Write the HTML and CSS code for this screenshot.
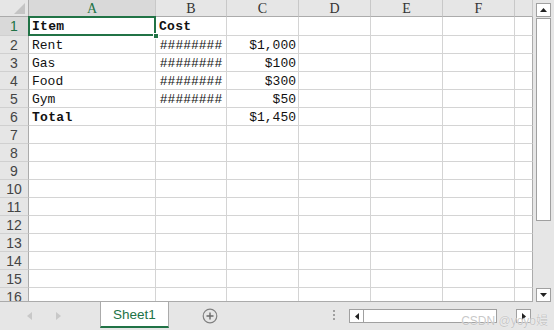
FILE: index.html
```html
<!DOCTYPE html>
<html>
<head>
<meta charset="utf-8">
<link rel="stylesheet" href="styles.css">
</head>
<body>
<div class="app">
  <div class="main">
    <div class="sheet">
      <div class="corner"><svg width="11" height="11" viewBox="0 0 11 11"><polygon points="11,0 11,11 0,11" fill="#c4c4c4"/></svg></div>
      <div class="ch sel">A</div>
      <div class="ch">B</div>
      <div class="ch">C</div>
      <div class="ch">D</div>
      <div class="ch">E</div>
      <div class="ch">F</div>
      <div class="ch"></div>

      <div class="rh sel">1</div><div class="c b">Item</div><div class="c b">Cost</div><div class="c"></div><div class="c"></div><div class="c"></div><div class="c"></div><div class="c"></div>
      <div class="rh">2</div><div class="c">Rent</div><div class="c h">########</div><div class="c r">$1,000</div><div class="c"></div><div class="c"></div><div class="c"></div><div class="c"></div>
      <div class="rh">3</div><div class="c">Gas</div><div class="c h">########</div><div class="c r">$100</div><div class="c"></div><div class="c"></div><div class="c"></div><div class="c"></div>
      <div class="rh">4</div><div class="c">Food</div><div class="c h">########</div><div class="c r">$300</div><div class="c"></div><div class="c"></div><div class="c"></div><div class="c"></div>
      <div class="rh">5</div><div class="c">Gym</div><div class="c h">########</div><div class="c r">$50</div><div class="c"></div><div class="c"></div><div class="c"></div><div class="c"></div>
      <div class="rh">6</div><div class="c b">Total</div><div class="c"></div><div class="c r">$1,450</div><div class="c"></div><div class="c"></div><div class="c"></div><div class="c"></div>
      <div class="rh">7</div><div class="c"></div><div class="c"></div><div class="c"></div><div class="c"></div><div class="c"></div><div class="c"></div><div class="c"></div>
      <div class="rh">8</div><div class="c"></div><div class="c"></div><div class="c"></div><div class="c"></div><div class="c"></div><div class="c"></div><div class="c"></div>
      <div class="rh">9</div><div class="c"></div><div class="c"></div><div class="c"></div><div class="c"></div><div class="c"></div><div class="c"></div><div class="c"></div>
      <div class="rh">10</div><div class="c"></div><div class="c"></div><div class="c"></div><div class="c"></div><div class="c"></div><div class="c"></div><div class="c"></div>
      <div class="rh">11</div><div class="c"></div><div class="c"></div><div class="c"></div><div class="c"></div><div class="c"></div><div class="c"></div><div class="c"></div>
      <div class="rh">12</div><div class="c"></div><div class="c"></div><div class="c"></div><div class="c"></div><div class="c"></div><div class="c"></div><div class="c"></div>
      <div class="rh">13</div><div class="c"></div><div class="c"></div><div class="c"></div><div class="c"></div><div class="c"></div><div class="c"></div><div class="c"></div>
      <div class="rh">14</div><div class="c"></div><div class="c"></div><div class="c"></div><div class="c"></div><div class="c"></div><div class="c"></div><div class="c"></div>
      <div class="rh">15</div><div class="c"></div><div class="c"></div><div class="c"></div><div class="c"></div><div class="c"></div><div class="c"></div><div class="c"></div>
      <div class="rh">16</div><div class="c"></div><div class="c"></div><div class="c"></div><div class="c"></div><div class="c"></div><div class="c"></div><div class="c"></div>

      <div class="selection"><div class="handle"></div></div>
    </div>
    <div class="vscroll">
      <div class="sbtn"><svg width="7" height="4" viewBox="0 0 7 4"><polygon points="3.5,0 7,4 0,4" fill="#222"/></svg></div>
      <div class="vthumb"></div>
      <div class="vspace"></div>
      <div class="sbtn"><svg width="7" height="4" viewBox="0 0 7 4"><polygon points="0,0 7,0 3.5,4" fill="#222"/></svg></div>
    </div>
  </div>
  <div class="tabbar">
    <div class="nav">
      <svg width="5" height="8" viewBox="0 0 5 8"><polygon points="5,0 5,8 0,4" fill="#c8c8c8"/></svg>
      <svg width="5" height="8" viewBox="0 0 5 8"><polygon points="0,0 5,4 0,8" fill="#c8c8c8"/></svg>
    </div>
    <div class="tab">Sheet1</div>
    <div class="add"><svg width="16" height="16" viewBox="0 0 16 16"><circle cx="8" cy="8" r="6.8" fill="none" stroke="#808080" stroke-width="1.2"/><path d="M8 4.5v7M4.5 8h7" stroke="#6a6a6a" stroke-width="1.4"/></svg></div>
    <div class="dots"><span></span><span></span><span></span></div>
    <div class="hscroll">
      <div class="hbtn"><svg width="4" height="7" viewBox="0 0 4 7"><polygon points="4,0 4,7 0,3.5" fill="#222"/></svg></div>
      <div class="hthumb"></div>
      <div class="htrack"></div>
      <div class="hbtn"><svg width="4" height="7" viewBox="0 0 4 7"><polygon points="0,0 4,3.5 0,7" fill="#222"/></svg></div>
    </div>
    <div class="watermark">CSDN @yoyo嫚</div>
  </div>
</div>
</body>
</html>
```
FILE: styles.css
```css
* { box-sizing: border-box; }
html, body { margin: 0; padding: 0; }
body { width: 554px; height: 330px; overflow: hidden; background: #e6e6e6; }
.app { width: 554px; height: 330px; display: flex; flex-direction: column; position: relative; }
.main { display: flex; height: 302px; }
.sheet {
  position: relative;
  width: 533px;
  height: 302px;
  overflow: hidden;
  display: grid;
  grid-template-columns: 29px 127px 71px 72px 72px 72px 72px 18px;
  grid-template-rows: 17px 19px repeat(15, 18px);
  background: #fff;
  border-bottom: 1px solid #ababab;
}
.corner {
  background: #e6e6e6;
  border-right: 1px solid #ababab;
  border-bottom: 1px solid #ababab;
  display: flex; align-items: flex-end; justify-content: flex-end;
  padding: 0 3px 2px 0;
}
.ch {
  background: #e6e6e6;
  border-right: 1px solid #c8c8c8;
  border-bottom: 1px solid #ababab;
  font-family: "Liberation Serif", serif;
  font-size: 14px;
  color: #333;
  text-align: center;
  line-height: 18px;
}
.ch:last-of-type { border-right: 1px solid #ababab; }
.ch.sel { background: #d9d9d9; color: #217346; border-bottom: 1px solid #217346; }
.rh {
  background: #e6e6e6;
  border-right: 1px solid #ababab;
  border-bottom: 1px solid #d0d0d0;
  font-family: "Liberation Sans", sans-serif;
  font-size: 14px;
  color: #444;
  text-align: center;
  line-height: 17px;
  padding-top: 1px;
}
.rh.sel { background: #d9d9d9; color: #217346; }
.c {
  border-right: 1px solid #d4d4d4;
  border-bottom: 1px solid #d4d4d4;
  font-family: "Liberation Mono", monospace;
  font-size: 13px;
  color: #111;
  padding: 1px 2px 0 3px;
  line-height: 18px;
  white-space: nowrap;
  overflow: hidden;
}
.c:nth-child(8n+8) { border-right: 1px solid #ababab; }
.c.b { font-weight: bold; letter-spacing: 0.3px; }
.c.r { text-align: right; }
.c.h { text-align: center; padding: 1px 0 0 0; }
.selection {
  position: absolute;
  left: 28px; top: 16px;
  width: 128px; height: 20px;
  border: 2px solid #217346;
}
.handle {
  position: absolute;
  right: -5px; bottom: -5px;
  width: 6px; height: 6px;
  background: #217346;
  border: 1px solid #fff;
}
.vscroll {
  width: 21px;
  display: flex; flex-direction: column;
  padding: 3px 3px 0 3px;
}
.sbtn {
  width: 15px; height: 14px;
  background: #fff;
  border: 1px solid #a0a0a0;
  display: flex; align-items: center; justify-content: center;
}
.vthumb {
  width: 15px; height: 203px;
  margin-top: 1px;
  background: #fff;
  border: 1px solid #a0a0a0;
}
.vspace { flex: 1; }
.tabbar {
  height: 28px;
  display: flex;
  align-items: flex-start;
  position: relative;
}
.nav {
  width: 100px;
  display: flex; gap: 24px;
  padding: 10px 0 0 27px;
}
.tab {
  width: 69px; height: 26px;
  background: #fff;
  border-left: 1px solid #ababab;
  border-right: 1px solid #ababab;
  border-bottom: 2px solid #217346;
  color: #217346;
  font-family: "Liberation Sans", sans-serif;
  font-size: 13.5px;
  text-align: center;
  line-height: 25px;
}
.add { margin: 6px 0 0 33px; width: 16px; height: 16px; }
.dots {
  margin: 8px 0 0 115px;
  display: flex; flex-direction: column; gap: 2px;
}
.dots span { width: 2px; height: 2px; background: #a0a0a0; display: block; }
.hscroll {
  margin: 7px 0 0 14px;
  display: flex;
  width: 182px; height: 14px;
}
.hbtn {
  width: 15px; height: 14px;
  background: #fff;
  border: 1px solid #a0a0a0;
  display: flex; align-items: center; justify-content: center;
}
.hthumb {
  width: 133px; height: 14px;
  background: #fff;
  border: 1px solid #a0a0a0;
  border-left: none;
}
.htrack { flex: 1; }
.watermark {
  position: absolute;
  right: 6px; top: 9px;
  font-family: "Liberation Sans", "Noto Sans CJK SC", sans-serif;
  font-size: 12px;
  color: rgba(190, 190, 190, 0.85);
  text-shadow: 0 0 1px #fff;
}
```
